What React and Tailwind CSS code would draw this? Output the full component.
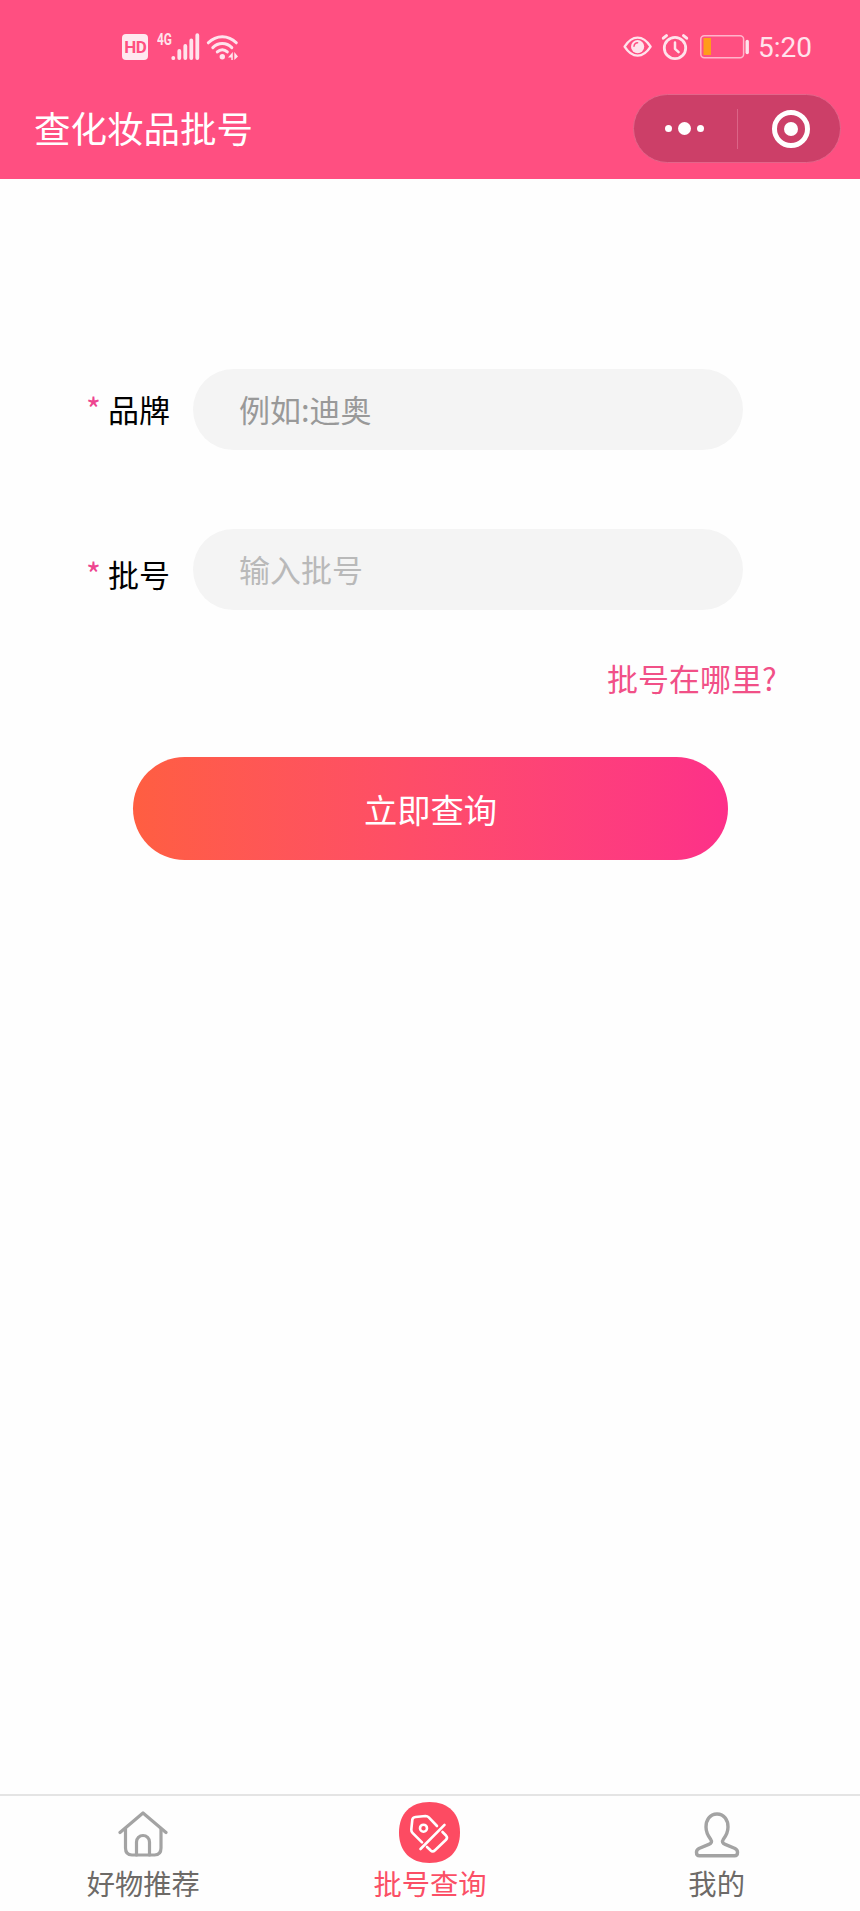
import React, { useState } from "react";

const StatusBar = () => {
  return (
    <div className="h-[94px] flex items-center justify-between pl-[122px] pr-[48px] text-[#ffe3ec]">
      <div className="flex items-center">
        <div className="w-[26px] h-[26px] rounded-[4px] bg-[#ffe8ef] text-[#ff4f81] flex items-center justify-center font-['Roboto',sans-serif] font-bold text-[17px] leading-none tracking-[-0.5px]">
          <span className="-mr-[0.5px]">HD</span>
        </div>
        <span className="w-[14px] ml-[9px] mr-[-1px] mb-[13px] font-['Roboto',sans-serif] font-bold text-[16.5px] leading-none">
          <span className="inline-block origin-left scale-x-[0.72]">4G</span>
        </span>
        <svg width="70" height="30" viewBox="170 32 70 30" fill="none" stroke="currentColor" strokeLinecap="round">
          <g strokeWidth="3.8">
            <path d="M173.3 57.8v.4M179.3 51v7M185.3 46v12M191.3 40.5V58M197.3 35.2V58" />
          </g>
          <g strokeWidth="3">
            <path d="M208.3 42.8c8-8.2 20-8.2 28 0" />
            <path d="M212.8 47.6c5.4-5.4 13.6-5.4 19 0" />
            <path d="M217.3 51.9c3-2.8 7-2.8 10 0" />
          </g>
          <circle cx="222.3" cy="56.8" r="2.7" fill="currentColor" stroke="none" />
          <path d="M232.8 52v8h-1.5v-2.5h-3.3zM234.3 60v-8l3.7 4.5z" fill="currentColor" stroke="none" />
        </svg>
      </div>
      <div className="flex items-center">
        <svg width="128" height="30" viewBox="622 32 128 30" fill="none" stroke="currentColor" strokeLinecap="round">
          <path d="M624.6 46.6c7.6-12 18.4-12 26 0c-7.6 12-18.4 12-26 0z" strokeWidth="2.4" strokeLinejoin="round" />
          <circle cx="637.6" cy="46.6" r="6.6" fill="currentColor" stroke="none" />
          <path d="M634 46.2c.2-2.2 1.6-3.4 3.6-3.5" stroke="#ff4f81" strokeWidth="1.5" />
          <circle cx="675" cy="48" r="10.7" strokeWidth="2.8" />
          <path d="M675 42.5v6.3l3.6 3.4" strokeWidth="2.5" strokeLinejoin="round" />
          <path d="M663.3 38.2l3.2-2.6M686.7 38.2l-3.2-2.6" strokeWidth="3" />
          <rect x="700.8" y="35.8" width="42.8" height="22" rx="3.5" stroke="#ffb5cb" strokeWidth="1.5" />
          <rect x="703.5" y="38" width="7.5" height="17" fill="#ff9c1a" stroke="none" />
          <path d="M747.2 41.5v11" strokeWidth="3.4" />
        </svg>
        <span className="ml-[8px] mt-[2px] font-['Roboto',sans-serif] text-[28px] leading-none">5:20</span>
      </div>
    </div>
  );
};

const Capsule = () => {
  return (
    <div className="w-[208px] h-[69px] rounded-full bg-[#cc3f68] border-[1.5px] border-[#e4658a] flex items-center">
      <div className="w-[103px] flex items-center justify-center gap-[6px] pr-[2px]">
        <span className="w-[7px] h-[7px] rounded-full bg-white" />
        <span className="w-[13px] h-[13px] rounded-full bg-white" />
        <span className="w-[7px] h-[7px] rounded-full bg-white" />
      </div>
      <div className="w-px h-[40px] bg-[#dc6487]" />
      <div className="flex-1 flex items-center justify-center pl-[4px]">
        <div className="w-[38px] h-[38px] rounded-full border-[5px] border-white flex items-center justify-center">
          <span className="w-[14px] h-[14px] rounded-full bg-white" />
        </div>
      </div>
    </div>
  );
};

const HomeIcon = () => (
  <svg width="50" height="46" viewBox="0 0 50 46" fill="none" stroke="#a3a3a3" strokeWidth="3.2" strokeLinecap="round" strokeLinejoin="round">
    <path d="M2 21.5L25 2l23 19.5" />
    <path d="M7.5 18v19q0 7 6.5 7h22.5q6.5 0 6.500-7V18" />
    <path d="M18.500 44V31a6.500 6.500 0 0 1 13 0v13" />
  </svg>
);

const TagIcon = () => (
  <svg width="61" height="61" viewBox="0 0 61 61" fill="none" stroke="white" strokeWidth="2.6" strokeLinecap="round" strokeLinejoin="round">
    <path d="M30.5 0C49.500 0 61 11.500 61 30.500S49.500 61 30.500 61S0 49.500 0 30.500S11.500 0 30.500 0z" fill="#fd4b62" stroke="none" />
    <path d="M38 24L29.8 15.300Q28.500 14 26.500 14L16.500 15Q13.500 15.300 13.300 18L12.300 27.500Q12.200 29.500 13.500 30.800L23 40.300" />
    <path d="M45.500 22.800L21.500 47" />
    <path d="M43.500 30L47 33.500Q49 35.700 47 37.800L36 48.300Q33.700 50.500 31.500 48.300L28 45" />
    <circle cx="24.500" cy="26.200" r="3.500" />
  </svg>
);

const UserIcon = () => (
  <svg width="46" height="46" viewBox="0 0 46 46" fill="none" stroke="#a3a3a3" strokeWidth="3.4" strokeLinejoin="round">
    <path d="M23 2C15.500 2 12 8.500 12 15c0 5.500 2.200 9 4.600 12.200c1.700 2.400.8 4.100-1.800 5.200L5.500 36.300Q2.500 37.800 2.500 40v.500q0 3.300 3 3.300h35q3 0 3-3.300V40q0-2.200-3-3.700L31.200 32.400c-2.600-1.100-3.500-2.800-1.800-5.200C31.800 24 34 20.500 34 15C34 8.500 30.500 2 23 2z" />
  </svg>
);

const App = () => {
  const [brand, setBrand] = useState("");
  const [batch, setBatch] = useState("");

  return (
    <div className="w-[860px] h-[1911px] flex flex-col bg-[#fefefe] font-['Noto_Sans_CJK_SC',sans-serif] overflow-hidden">
      <header className="h-[179px] shrink-0 bg-[#ff4f81]">
        <StatusBar />
        <div className="flex items-center justify-between pl-[34px] pr-[19px]">
          <h1 className="mt-[-1px] text-[36.5px] leading-[50px] text-white">查化妆品批号</h1>
          <Capsule />
        </div>
      </header>

      <main className="flex-1 pt-[190px]">
        <div className="flex items-center h-[81px] pl-[86px]">
          <span className="w-[22px] mt-[-4px] text-[32px] leading-[40px] text-[#ee4590]">*</span>
          <label className="w-[85px] mt-[-2px] text-[31px] leading-[40px] text-black">品牌</label>
          <input
            type="text"
            className="w-[550px] h-[81px] rounded-full bg-[#f4f4f4] px-[46px] pb-[3px] text-[31px] placeholder:text-[#999999] outline-none"
            placeholder="例如:迪奥"
            value={brand}
            onChange={(e) => setBrand(e.target.value)}
          />
        </div>
        <div className="flex items-center h-[81px] mt-[79px] pl-[86px]">
          <span className="w-[22px] mt-[6px] text-[32px] leading-[40px] text-[#ee4590]">*</span>
          <label className="w-[85px] mt-[8px] text-[31px] leading-[40px] text-black">批号</label>
          <input
            type="text"
            className="w-[550px] h-[81px] rounded-full bg-[#f4f4f4] px-[46px] pb-[2px] text-[31px] placeholder:text-[#b9b9b9] outline-none"
            placeholder="输入批号"
            value={batch}
            onChange={(e) => setBatch(e.target.value)}
          />
        </div>
        <p className="mt-[48px] pl-[607px] text-[31px] leading-[40px] text-[#f15087]">批号在哪里?</p>
        <button
          type="button"
          className="block w-[595px] h-[103px] mt-[59px] ml-[133px] rounded-full bg-linear-to-r from-[#ff5e41] to-[#fd3089] text-[33.3px] text-white"
        >
          立即查询
        </button>
      </main>

      <nav className="h-[117px] shrink-0 grid grid-cols-3 border-t-2 border-[#e4e4e4] text-[28.3px] leading-[40px] text-[#6d6a67]">
        <div className="flex flex-col items-center">
          <div className="h-[67px] pt-[15px]">
            <HomeIcon />
          </div>
          <span>好物推荐</span>
        </div>
        <div className="flex flex-col items-center text-[#fb4f66]">
          <div className="h-[67px] pt-[6px]">
            <TagIcon />
          </div>
          <span>批号查询</span>
        </div>
        <div className="flex flex-col items-center">
          <div className="h-[67px] pt-[16px]">
            <UserIcon />
          </div>
          <span>我的</span>
        </div>
      </nav>
    </div>
  );
};

export default App;
